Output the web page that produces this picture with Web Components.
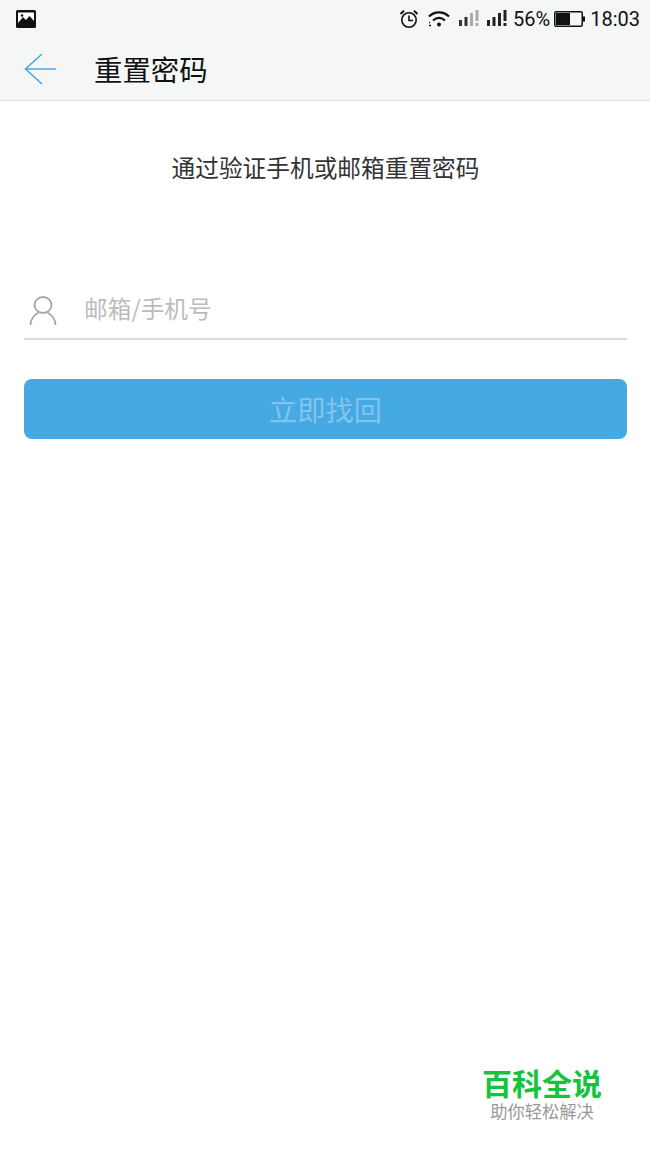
<!DOCTYPE html>
<html>
<head>
<meta charset="utf-8">
<style>
    html, body { margin: 0; padding: 0; background: #fff; }
    body { width: 650px; height: 1155px; overflow: hidden; display: flex; flex-direction: column; font-family: "Noto Sans CJK SC", "Roboto", sans-serif; }
</style>
</head>
<body>
<status-bar></status-bar>
<app-bar>重置密码</app-bar>
<reset-form hint="通过验证手机或邮箱重置密码" placeholder="邮箱/手机号" action="立即找回"></reset-form>
<water-mark></water-mark>

<script>
class StatusBar extends HTMLElement {
    constructor() {
        super();
        this.attachShadow({ mode: 'open' });
    }

    connectedCallback() {
        this.shadowRoot.innerHTML = `
            <style>
                :host { display: flex; align-items: center; height: 38px; padding: 0 10px 0 16px; background: #f5f6f6; color: #111; font: 20px Roboto, sans-serif; }
                .right { margin-left: auto; display: flex; align-items: center; }
                svg { display: block; }
                .bars { margin-bottom: 2px; }
                .pct { margin: 0 4px 0 6px; }
                .time { margin-left: 5px; }
            </style>
            <svg width="20" height="18" viewBox="0 0 20 18">
                <rect width="20" height="18" rx="1.5" fill="#111"/>
                <rect x="2" y="2.5" width="16" height="11" fill="#fff"/>
                <path d="M2 13 L7 7 L10 10 L13.5 6 L18 11 V15 H2 Z" fill="#111"/>
                <circle cx="6" cy="5.5" r="1.3" fill="#111"/>
            </svg>
            <div class="right">
                <svg width="20" height="20" viewBox="0 0 20 20" fill="none" stroke="#111" stroke-width="1.6">
                    <circle cx="10" cy="11" r="7.2"/>
                    <path d="M10 6.5 V11.5 H14"/>
                    <path d="M1.5 5 L5 1.8 M18.5 5 L15 1.8" stroke-width="2"/>
                </svg>
                <svg style="margin-left:9px" width="22" height="18" viewBox="0 0 22 18" fill="none" stroke="#111" stroke-width="2.2">
                    <path d="M1 6.5 C6.5 1 15.5 1 21 6.5"/>
                    <path d="M5 10.5 C9 7 13 7 17 10.5"/>
                    <circle cx="11" cy="14.5" r="2" fill="#111" stroke="none"/>
                    <path d="M1 15.5 h2 M1 12.5 h1" stroke-width="1.6"/>
                </svg>
                <svg class="bars" style="margin-left:9px" width="20" height="18" viewBox="0 0 20 18">
                    <rect x="0" y="11" width="3" height="6" fill="#333"/>
                    <rect x="5.5" y="8" width="3" height="9" fill="#333"/>
                    <rect x="11" y="4" width="3" height="13" fill="#aaa"/>
                    <rect x="16.5" y="1" width="3" height="11" fill="#aaa"/>
                    <rect x="16.5" y="14" width="3" height="3" fill="#aaa"/>
                </svg>
                <svg class="bars" style="margin-left:8px" width="20" height="18" viewBox="0 0 20 18">
                    <rect x="0" y="11" width="3" height="6" fill="#222"/>
                    <rect x="5.5" y="8" width="3" height="9" fill="#222"/>
                    <rect x="11" y="4" width="3" height="13" fill="#222"/>
                    <rect x="16.5" y="1" width="3" height="11" fill="#222"/>
                    <rect x="16.5" y="14" width="3" height="3" fill="#222"/>
                </svg>
                <span class="pct">56%</span>
                <svg width="31" height="16" viewBox="0 0 31 16">
                    <rect x="0.75" y="0.75" width="27.5" height="14.5" rx="1.5" fill="none" stroke="#111" stroke-width="1.5"/>
                    <rect x="2" y="2" width="14" height="12" fill="#111"/>
                    <rect x="29" y="5.5" width="2" height="5" fill="#111"/>
                </svg>
                <span class="time">18:03</span>
            </div>
        `;
    }
}

class AppBar extends HTMLElement {
    constructor() {
        super();
        this.attachShadow({ mode: 'open' });
    }

    connectedCallback() {
        this.shadowRoot.innerHTML = `
            <style>
                :host { display: flex; align-items: center; height: 62px; padding: 0 0 0 24px; background: #f5f6f6; border-bottom: 1px solid #dcdcdc; color: #111; font-size: 28.4px; }
                svg { display: block; margin-right: 38px; }
                span { padding-bottom: 2px; }
            </style>
            <svg width="32" height="32" viewBox="0 0 32 32" fill="none" stroke="#4aa6dc" stroke-width="1.5">
                <path d="M18 1 L1.5 16 L18 31"/>
                <path d="M1.5 16 H32"/>
            </svg>
            <span><slot></slot></span>
        `;
    }
}

class ResetForm extends HTMLElement {
    constructor() {
        super();
        this.attachShadow({ mode: 'open' });
    }

    connectedCallback() {
        this.shadowRoot.innerHTML = `
            <style>
                :host { display: block; padding: 0 23px 0 24px; }
                .hint { margin-top: 48px; height: 36px; line-height: 36px; text-align: center; color: #333; font-size: 23.7px; }
                .field { display: flex; align-items: center; margin-top: 93px; height: 60px; border-bottom: 2px solid #dcdcdc; color: #bcbcbc; font-size: 23.7px; }
                .field svg { display: block; margin: 4px 27px 0 5px; }
                button { display: block; width: 100%; height: 60px; margin-top: 39px; padding: 0 0 2px; border: 0; border-radius: 8px; background: #45a9e4; color: #82c4ec; font: inherit; font-size: 28.2px; }
            </style>
            <div class="hint">${this.getAttribute('hint')}</div>
            <div class="field">
                <svg width="28" height="32" viewBox="0 0 28 32" fill="none" stroke="#a6a6a6" stroke-width="1.8">
                    <ellipse cx="14" cy="11" rx="8.5" ry="8"/>
                    <path d="M1.5 31 C1.5 24 6 20.5 9.5 18.5 M26.5 31 C26.5 24 22 20.5 18.5 18.5"/>
                </svg>
                <span>${this.getAttribute('placeholder')}</span>
            </div>
            <button>${this.getAttribute('action')}</button>
        `;
    }
}

class WaterMark extends HTMLElement {
    constructor() {
        super();
        this.attachShadow({ mode: 'open' });
    }

    connectedCallback() {
        this.shadowRoot.innerHTML = `
            <style>
                :host { display: flex; flex-direction: column; align-items: center; align-self: flex-end; margin-top: auto; margin-right: 48px; margin-bottom: 33px; font-family: "Liberation Sans", "Noto Sans CJK SC", sans-serif; }
                .name { color: #14c43c; font-size: 30px; font-weight: 700; line-height: 36px; }
                .tag { margin-top: -1px; color: #999; font-size: 17.3px; line-height: 20px; }
            </style>
            <div class="name">百科全说</div>
            <div class="tag">助你轻松解决</div>
        `;
    }
}

customElements.define('status-bar', StatusBar);
customElements.define('app-bar', AppBar);
customElements.define('reset-form', ResetForm);
customElements.define('water-mark', WaterMark);
</script>
</body>
</html>
